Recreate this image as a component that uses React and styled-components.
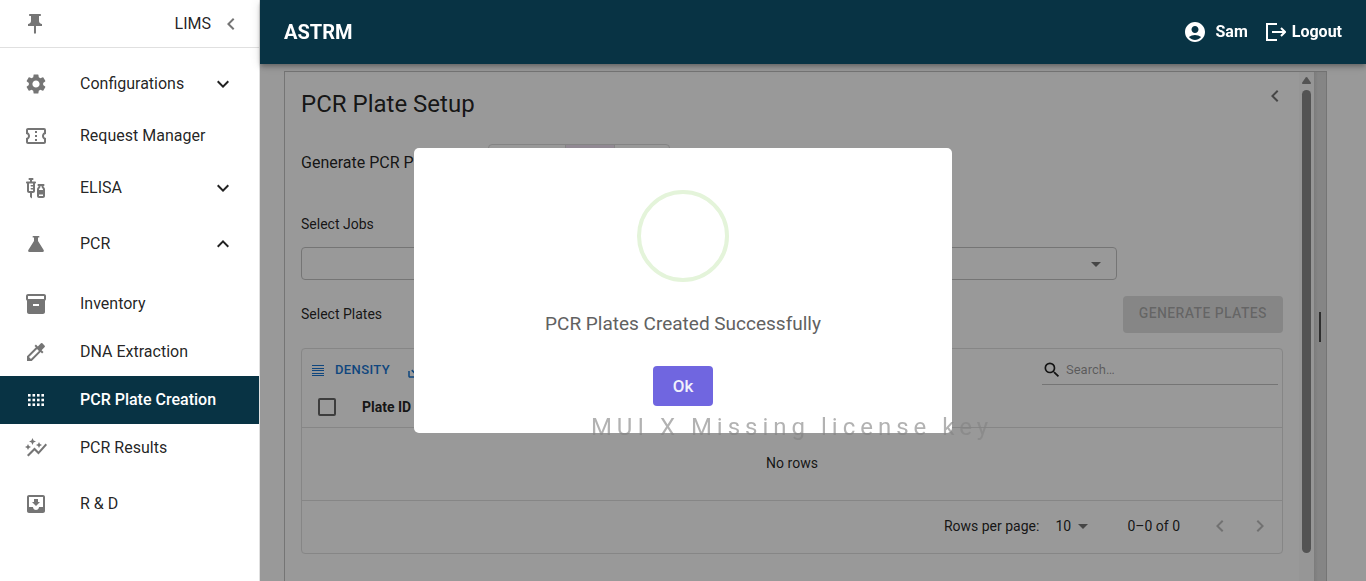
import React from "react";
import styled, { createGlobalStyle, css } from "styled-components";
import {
  MdPushPin, MdChevronLeft, MdChevronRight, MdExpandMore, MdExpandLess, MdSettings,
  MdOutlineConfirmationNumber, MdVaccines, MdInventory2, MdColorize, MdAutoGraph,
  MdMoveToInbox, MdAccountCircle, MdSearch, MdArrowDropDown,
} from "react-icons/md";

const GlobalStyle = createGlobalStyle`
  * { box-sizing: border-box; }
  body { margin: 0; overflow: hidden; background: #fff; color: rgba(0,0,0,.87);
    font-family: Roboto, "Liberation Sans", sans-serif; font-size: 14px; line-height: 20px; }
  h1, h2, p { margin: 0; }
  button, input, select { font: inherit; color: inherit; margin: 0; }
  button { cursor: pointer; border: 0; background: none; padding: 0; }
  a { color: inherit; text-decoration: none; }
`;

const Shell = styled.div`
  display: grid; grid-template-columns: 260px minmax(0, 1fr); height: 100vh;
`;
const Sidebar = styled.aside`
  position: relative; z-index: 20; background: #fff; border-right: 1px solid #e0e0e0;
`;
const Brand = styled.div`
  display: flex; align-items: center; gap: 8px; height: 48px; padding: 0 16px 0 23px;
  border-bottom: 1px solid #e0e0e0; font-size: 16px; line-height: 24px;
  svg { color: #757575; }
`;
const BrandName = styled.span`margin-left: auto;`;
const IconButton = styled.button`
  display: flex; align-items: center; justify-content: center;
  width: ${(p) => p.$size || 24}px; height: ${(p) => p.$size || 24}px;
  color: ${(p) => (p.$dim ? "rgba(0,0,0,.26)" : "rgba(0,0,0,.54)")};
`;
const NavList = styled.ul`list-style: none; margin: 0; padding: ${(p) => (p.$nested ? "8px 0" : "8px 0 0")};`;
const NavLink = styled.a`
  display: flex; align-items: center; height: ${(p) => (p.$expandable ? 56 : 48)}px; padding: 0 24px;
  font-size: 16px; line-height: 24px;
  > svg:first-child { color: #757575; margin-right: 32px; }
  > span + svg { margin-left: auto; }
  ${(p) => p.$active && css`
    background: #083344; color: #fff; font-weight: 500;
    > svg:first-child { color: #fff; }
  `}
`;

const Page = styled.div`display: flex; flex-direction: column; min-width: 0; min-height: 0;`;
const TopBar = styled.header`
  position: relative; z-index: 20; flex: none; display: flex; align-items: center; gap: 18px;
  height: 64px; padding: 0 24px; background: #083344; color: #fff;
  box-shadow: 0 2px 4px -1px rgba(0,0,0,.2), 0 4px 5px rgba(0,0,0,.14), 0 1px 10px rgba(0,0,0,.12);
`;
const Logo = styled.h1`font-size: 20px; line-height: 32px; font-weight: 700; margin-right: auto;`;
const TopButton = styled.button`
  display: flex; align-items: center; gap: ${(p) => p.$gap}px;
  font-size: 16px; line-height: 24px; font-weight: 700;
`;

const Main = styled.main`
  flex: 1; min-height: 0; display: flex; padding: 7px 39px 0 24px; overflow: hidden;
`;
const SplitPane = styled.div`
  flex: 1; min-width: 0; display: flex; border: 1px solid #c4c4c4; border-bottom: 0;
`;
const Setup = styled.section`flex: 1; min-width: 0; padding: 12px 16px 0;`;
const SetupHeader = styled.div`
  display: flex; justify-content: space-between; align-items: flex-start;
  height: 60px; margin-right: -4px;
`;
const Title = styled.h2`font-size: 24px; line-height: 40px; font-weight: 400;`;
const GenerateRow = styled.div`
  display: flex; align-items: flex-end; height: 36px; gap: 16px; font-size: 16px;
  line-height: 24px;
`;
const GenerateLabel = styled.span`width: 171px; padding-bottom: 5px; white-space: nowrap;`;
const ToggleGroup = styled.div`
  display: flex; height: 36px; border: 1px solid #dcdcdc; border-radius: 4px; overflow: hidden;
`;
const Toggle = styled.button`
  width: ${(p) => p.$width}px; color: rgba(0,0,0,.54);
  background: ${(p) => (p.$on ? "#f2e5f5" : "transparent")};
  & + & { border-left: 1px solid #dcdcdc; }
`;
const Label = styled.label`display: block;`;
const JobField = styled.div`margin-top: 34px;`;
const SelectBox = styled.div`
  display: flex; align-items: center; width: 83.1%; height: 33px; margin-top: 13px;
  padding-right: 8px; border: 1px solid #c4c4c4; border-radius: 4px;
  svg { color: #757575; flex: none; }
`;
const BareSelect = styled.select`
  flex: 1; min-width: 0; appearance: none; border: 0; background: none; outline: 0;
`;
const PlatesHeader = styled.div`
  display: flex; align-items: center; justify-content: space-between; margin-top: 16px;
  > span { padding-bottom: 2px; }
`;
const GenerateButton = styled.button`
  height: 37px; padding: 0 16px 3px; border-radius: 4px; background: #e0e0e0;
  color: rgba(0,0,0,.26); font-weight: 500; letter-spacing: .028em; white-space: nowrap;
`;
const Grid = styled.div`
  margin-top: 15px; border: 1px solid #e0e0e0; border-radius: 4px;
`;
const Toolbar = styled.div`
  display: flex; align-items: flex-start; height: 38px; padding: 4px 4px 0 7px;
`;
const ToolButton = styled.button`
  display: flex; align-items: center; gap: 8px; height: 36px; margin-right: 16px;
  color: #1976d2; font-size: 13px; line-height: 20px; font-weight: 500; letter-spacing: .028em;
  span { padding-bottom: 2px; }
`;
const SearchBox = styled.label`
  display: flex; align-items: center; gap: 4px; width: 236px; height: 32px; margin-left: auto;
  padding-top: 2px; border-bottom: 1px solid #c4c4c4;
`;
const SearchInput = styled.input`
  flex: 1; min-width: 0; padding: 0; border: 0; outline: 0; background: none; font-size: 13px;
  &::placeholder { color: rgba(0,0,0,.42); opacity: 1; }
`;
const Table = styled.table`width: 100%; border-collapse: collapse;`;
const HeadCell = styled.th`
  height: 40px; padding: 1px 10px 0; text-align: left; font-weight: 700;
  width: ${(p) => p.$width || "auto"}; border-bottom: 1px solid #e0e0e0;
`;
const EmptyCell = styled.td`
  height: 73px; padding: 0 0 2px; text-align: center; border-bottom: 1px solid #e0e0e0;
`;
const Tick = styled.input`
  appearance: none; display: block; width: 18px; height: 18px; margin: 0 6px;
  border: 2px solid #666; border-radius: 2px;
`;
const Pager = styled.div`
  display: flex; align-items: center; justify-content: flex-end; height: 52px;
  padding: 0 2px 2px 0;
`;
const PageSize = styled.span`
  display: flex; align-items: center; width: 40px; margin: 0 32px 0 16px;
  svg { flex: none; color: #757575; }
`;
const RowRange = styled.span`margin-right: 20px;`;
const Scrollbar = styled.div`
  flex: none; display: flex; flex-direction: column; align-items: flex-end; width: 15px;
  padding: 5px 3px 28px 0; background: #fafafa; color: #8a8a8a;
`;
const ScrollThumb = styled.div`
  flex: 1; width: 9px; margin-top: 6px; border-radius: 5px; background: #8a8a8a;
`;
const Resizer = styled.div`
  flex: none; display: flex; align-items: center; justify-content: center; width: 12px;
  background: linear-gradient(90deg, #cfcfcf, #dedede 4px);
`;
const Grip = styled.span`width: 2px; height: 30px; background: #4d4d4d;`;

const Backdrop = styled.div`
  position: fixed; inset: 0; z-index: 10; background: rgba(0,0,0,.4);
`;
const DialogLayer = styled.div`
  position: fixed; inset: 0; z-index: 30; display: flex; align-items: center; justify-content: center;
`;
const Dialog = styled.div`
  display: flex; flex-direction: column; align-items: center; width: 538px; max-width: 90%;
  padding: 42px 20px 27px; border-radius: 5px; background: #fff;
`;
const SuccessRing = styled.div`
  width: 92px; height: 92px; border: 4px solid #e4f4da; border-radius: 50%;
`;
const Message = styled.p`margin: 27px 0; font-size: 19px; line-height: 30px; color: #616161;`;
const OkButton = styled.button`
  width: 60px; height: 40px; border-radius: 4px; background: #7066e0; color: #f1f0fc;
  font-size: 17px; line-height: 24px; font-weight: 500;
`;
const Watermark = styled.div`
  position: fixed; z-index: 40; left: 301px; right: 83px; top: 412px; text-align: center;
  font-size: 24px; line-height: 30px; letter-spacing: 5px; color: rgba(130,130,130,.62);
  white-space: nowrap; pointer-events: none;
`;

const Flask = ({ size }) => (
  <svg width={size} height={size} viewBox="0 0 24 24" fill="currentColor" aria-hidden="true">
    <path d="M8.700 4h6.600v1.400H14V9l5.800 9.300q.6 1.700-1.200 1.700H5.400q-1.800 0-1.200-1.700L10 9V5.400H8.700z" />
  </svg>
);
const PlateDots = ({ size }) => (
  <svg width={size} height={size} viewBox="0 0 24 24" fill="currentColor" aria-hidden="true">
    {[6, 10.700, 15.400].map((y) => [4, 8.500, 13, 17.400].map((x) => (
      <rect key={`${x}-${y}`} x={x} y={y} width="2.600" height="2.600" />
    )))}
  </svg>
);
const LogoutIcon = () => (
  <svg width="20" height="20" viewBox="0 0 20 20" fill="none" stroke="currentColor" strokeWidth="2" aria-hidden="true">
    <path d="M11 2H1v16h10M6 10h12.500M15 6l4 4-4 4" />
  </svg>
);
const DensityIcon = () => (
  <svg width="18" height="18" viewBox="0 0 18 18" fill="currentColor" aria-hidden="true">
    <path d="M3 3h12v1H3zM3 6h12v1H3zM3 8h12v1H3zM3 11h12v1H3zM3 13h12v1H3z" />
  </svg>
);
const ExportIcon = () => (
  <svg width="18" height="18" viewBox="0 0 24 24" fill="currentColor" aria-hidden="true">
    <path d="M19 12v7H5v-7H3v7c0 1.100.9 2 2 2h14c1.100 0 2-.9 2-2v-7h-2zm-6 .67 2.590-2.580L17 11.500l-5 5-5-5 1.410-1.410L11 12.670V3h2z" />
  </svg>
);

const NAV = [
  { label: "Configurations", icon: MdSettings, arrow: MdExpandMore },
  { label: "Request Manager", icon: MdOutlineConfirmationNumber },
  { label: "ELISA", icon: MdVaccines, arrow: MdExpandMore },
  {
    label: "PCR", icon: Flask, arrow: MdExpandLess,
    items: [
      { label: "Inventory", icon: MdInventory2 },
      { label: "DNA Extraction", icon: MdColorize },
      { label: "PCR Plate Creation", icon: PlateDots, active: true },
      { label: "PCR Results", icon: MdAutoGraph },
    ],
  },
  { label: "R & D", icon: MdMoveToInbox },
];

const NavItem = ({ label, icon: Icon, arrow: Arrow, active, items }) => (
  <li>
    <NavLink href="#" $expandable={!!Arrow} $active={active}>
      <Icon size={24} />
      <span>{label}</span>
      {Arrow && <Arrow size={24} />}
    </NavLink>
    {items && (
      <NavList $nested>
        {items.map((item) => <NavItem key={item.label} {...item} />)}
      </NavList>
    )}
  </li>
);

export default function App() {
  return (
    <>
      <GlobalStyle />
      <Shell>
        <Sidebar>
          <Brand>
            <MdPushPin size={24} />
            <BrandName>LIMS</BrandName>
            <IconButton aria-label="Collapse menu"><MdChevronLeft size={24} /></IconButton>
          </Brand>
          <nav>
            <NavList>
              {NAV.map((item) => <NavItem key={item.label} {...item} />)}
            </NavList>
          </nav>
        </Sidebar>
        <Page>
          <TopBar>
            <Logo>ASTRM</Logo>
            <TopButton $gap={8}><MdAccountCircle size={24} />Sam</TopButton>
            <TopButton $gap={6}><LogoutIcon />Logout</TopButton>
          </TopBar>
          <Main>
            <SplitPane>
              <Setup>
                <SetupHeader>
                  <Title>PCR Plate Setup</Title>
                  <IconButton aria-label="Collapse panel"><MdChevronLeft size={24} /></IconButton>
                </SetupHeader>
                <GenerateRow>
                  <GenerateLabel>Generate PCR Plates by</GenerateLabel>
                  <ToggleGroup>
                    <Toggle $width={76} aria-label="Request" />
                    <Toggle $width={49} $on aria-label="Job" />
                    <Toggle $width={55} aria-label="Plate" />
                  </ToggleGroup>
                </GenerateRow>
                <JobField>
                  <Label htmlFor="jobs">Select Jobs</Label>
                  <SelectBox>
                    <BareSelect id="jobs" />
                    <MdArrowDropDown size={24} />
                  </SelectBox>
                </JobField>
                <PlatesHeader>
                  <span>Select Plates</span>
                  <GenerateButton disabled>GENERATE PLATES</GenerateButton>
                </PlatesHeader>
                <Grid>
                  <Toolbar>
                    <ToolButton><DensityIcon /><span>DENSITY</span></ToolButton>
                    <ToolButton aria-label="Export"><ExportIcon /></ToolButton>
                    <SearchBox>
                      <MdSearch size={20} />
                      <SearchInput placeholder="Search…" aria-label="Search" />
                    </SearchBox>
                  </Toolbar>
                  <Table>
                    <thead>
                      <tr>
                        <HeadCell $width="50px"><Tick type="checkbox" aria-label="Select all rows" /></HeadCell>
                        <HeadCell>Plate ID</HeadCell>
                      </tr>
                    </thead>
                    <tbody>
                      <tr><EmptyCell colSpan={2}>No rows</EmptyCell></tr>
                    </tbody>
                  </Table>
                  <Pager>
                    <label htmlFor="page-size">Rows per page:</label>
                    <PageSize>
                      <BareSelect id="page-size"><option>10</option></BareSelect>
                      <MdArrowDropDown size={24} />
                    </PageSize>
                    <RowRange>0–0 of 0</RowRange>
                    <IconButton $size={40} $dim disabled aria-label="Previous page"><MdChevronLeft size={24} /></IconButton>
                    <IconButton $size={40} $dim disabled aria-label="Next page"><MdChevronRight size={24} /></IconButton>
                  </Pager>
                </Grid>
              </Setup>
              <Scrollbar>
                <svg width="9" height="7" viewBox="0 0 9 7" fill="currentColor" aria-hidden="true">
                  <path d="M3.700.6Q4.500-.4 5.300.6L8.800 5.500Q9.200 7 8 7H1Q-.2 7 .2 5.500Z" />
                </svg>
                <ScrollThumb />
              </Scrollbar>
              <Resizer><Grip /></Resizer>
            </SplitPane>
          </Main>
        </Page>
      </Shell>
      <Backdrop />
      <DialogLayer>
        <Dialog role="dialog" aria-modal="true" aria-labelledby="result-message">
          <SuccessRing />
          <Message id="result-message">PCR Plates Created Successfully</Message>
          <OkButton>Ok</OkButton>
        </Dialog>
      </DialogLayer>
      <Watermark>MUI X Missing license key</Watermark>
    </>
  );
}
